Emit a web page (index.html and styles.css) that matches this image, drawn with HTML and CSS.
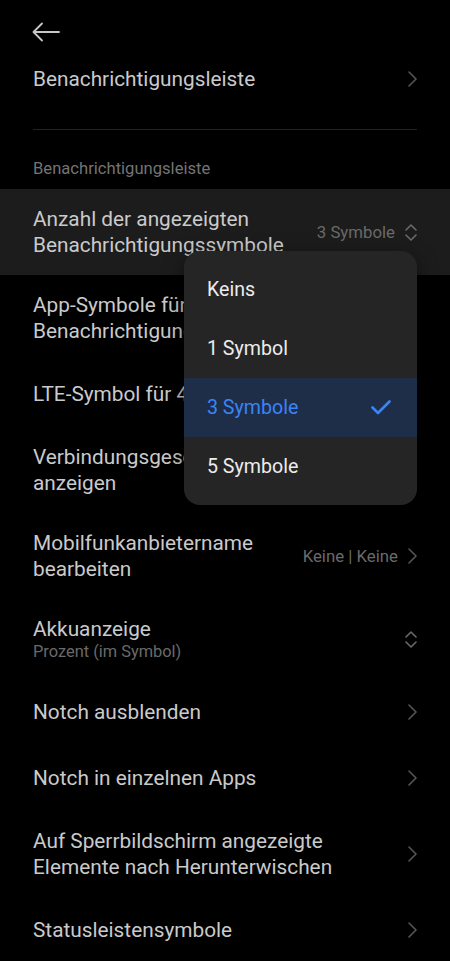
FILE: index.html
```html
<!DOCTYPE html>
<html lang="de">
  <head>
    <meta charset="UTF-8" />
    <meta name="viewport" content="width=device-width, initial-scale=1.0" />
    <title>Benachrichtigungsleiste</title>
    <link rel="stylesheet" href="styles.css">
  </head>
  <body>
    <div class="screen">
      <div class="topbar">
        <svg class="back" width="28" height="20" viewBox="0 0 28 20">
          <path d="M27 10H2M10 1.5L1.5 10L10 18.5" fill="none" stroke="#c8c8c8" stroke-width="1.8" stroke-linecap="round" stroke-linejoin="round" />
        </svg>
      </div>

      <div class="row">
        <div class="text"><div class="title">Benachrichtigungsleiste</div></div>
        <svg class="chevron" width="9" height="16" viewBox="0 0 9 16"><path d="M1 1l7 7-7 7" /></svg>
      </div>

      <div class="divider"></div>
      <div class="section">Benachrichtigungsleiste</div>

      <div class="row active">
        <div class="text"><div class="title">Anzahl der angezeigten Benachrichtigungssymbole</div></div>
        <span class="value">3 Symbole</span>
        <svg class="updown" width="12" height="17" viewBox="0 0 12 17"><path d="M1 6l5-5 5 5M1 11l5 5 5-5" /></svg>
      </div>

      <div class="row">
        <div class="text narrow"><div class="title">App-Symbole für Benachrichtigungen anzeigen</div></div>
        <span class="toggle"></span>
      </div>

      <div class="row">
        <div class="text"><div class="title">LTE-Symbol für 4G anzeigen</div></div>
        <span class="toggle"></span>
      </div>

      <div class="row">
        <div class="text narrow"><div class="title">Verbindungsgeschwindigkeit anzeigen</div></div>
        <span class="toggle"></span>
      </div>

      <div class="row">
        <div class="text"><div class="title">Mobilfunkanbietername bearbeiten</div></div>
        <span class="value">Keine | Keine</span>
        <svg class="chevron" width="9" height="16" viewBox="0 0 9 16"><path d="M1 1l7 7-7 7" /></svg>
      </div>

      <div class="row">
        <div class="text">
          <div class="title">Akkuanzeige</div>
          <div class="subtitle">Prozent (im Symbol)</div>
        </div>
        <svg class="updown" width="12" height="17" viewBox="0 0 12 17"><path d="M1 6l5-5 5 5M1 11l5 5 5-5" /></svg>
      </div>

      <div class="row">
        <div class="text"><div class="title">Notch ausblenden</div></div>
        <svg class="chevron" width="9" height="16" viewBox="0 0 9 16"><path d="M1 1l7 7-7 7" /></svg>
      </div>

      <div class="row">
        <div class="text"><div class="title">Notch in einzelnen Apps</div></div>
        <svg class="chevron" width="9" height="16" viewBox="0 0 9 16"><path d="M1 1l7 7-7 7" /></svg>
      </div>

      <div class="row">
        <div class="text"><div class="title">Auf Sperrbildschirm angezeigte Elemente nach Herunterwischen</div></div>
        <svg class="chevron" width="9" height="16" viewBox="0 0 9 16"><path d="M1 1l7 7-7 7" /></svg>
      </div>

      <div class="row">
        <div class="text"><div class="title">Statusleistensymbole</div></div>
        <svg class="chevron" width="9" height="16" viewBox="0 0 9 16"><path d="M1 1l7 7-7 7" /></svg>
      </div>

      <ul class="menu">
        <li>Keins</li>
        <li>1 Symbol</li>
        <li class="selected">
          3 Symbole
          <svg width="20" height="15" viewBox="0 0 20 15"><path d="M1.5 7.5l5.5 5.5L18.5 1.5" fill="none" stroke="#3b84f5" stroke-width="2.6" stroke-linecap="round" stroke-linejoin="round" /></svg>
        </li>
        <li>5 Symbole</li>
      </ul>
    </div>
  </body>
</html>
```

FILE: styles.css
```css
body {
  margin: 0;
  background-color: #000;
  font-family: Roboto, "Noto Sans", sans-serif;
  color: #cacaca;
}
.screen {
  position: relative;
  width: 450px;
  height: 961px;
  overflow: hidden;
}
.topbar {
  height: 46px;
  padding: 0 33px 4px;
  display: flex;
  align-items: flex-end;
  box-sizing: border-box;
}
.back {
  margin-left: -1px;
}
.row {
  display: flex;
  align-items: center;
  min-height: 66px;
  padding: 17px 33px;
  box-sizing: border-box;
  gap: 10px;
}
.row.active {
  background-color: #1c1c1c;
}
.text {
  flex: 1;
  min-width: 0;
}
.text.narrow {
  max-width: 300px;
}
.title {
  font-size: 20.8px;
  line-height: 26px;
  color: #cacaca;
}
.subtitle {
  font-size: 16.4px;
  line-height: 20px;
  color: #6a6a6a;
}
.value {
  font-size: 16.8px;
  color: #6a6a6a;
  white-space: nowrap;
}
.chevron path,
.updown path {
  fill: none;
  stroke: #555;
  stroke-width: 1.6;
  stroke-linecap: round;
  stroke-linejoin: round;
}
.updown path {
  stroke: #6a6a6a;
}
.toggle {
  width: 48px;
  height: 26px;
  border-radius: 13px;
  background-color: #333;
}
.divider {
  height: 1px;
  margin: 17px 33px 0;
  background-color: #222;
}
.section {
  padding: 29px 33px 10px;
  font-size: 16.6px;
  line-height: 20px;
  color: #747474;
}
.menu {
  position: absolute;
  left: 184px;
  top: 251px;
  width: 233px;
  margin: 0;
  padding: 9px 0;
  list-style: none;
  background-color: #252525;
  border-radius: 16px;
  box-shadow: 0 6px 20px rgba(0, 0, 0, 0.5);
}
.menu li {
  height: 59px;
  padding: 0 26px 0 23px;
  display: flex;
  align-items: center;
  justify-content: space-between;
  font-size: 19.6px;
  color: #ececec;
}
.menu li.selected {
  background-color: #1e2e49;
  color: #3b84f5;
}
```
